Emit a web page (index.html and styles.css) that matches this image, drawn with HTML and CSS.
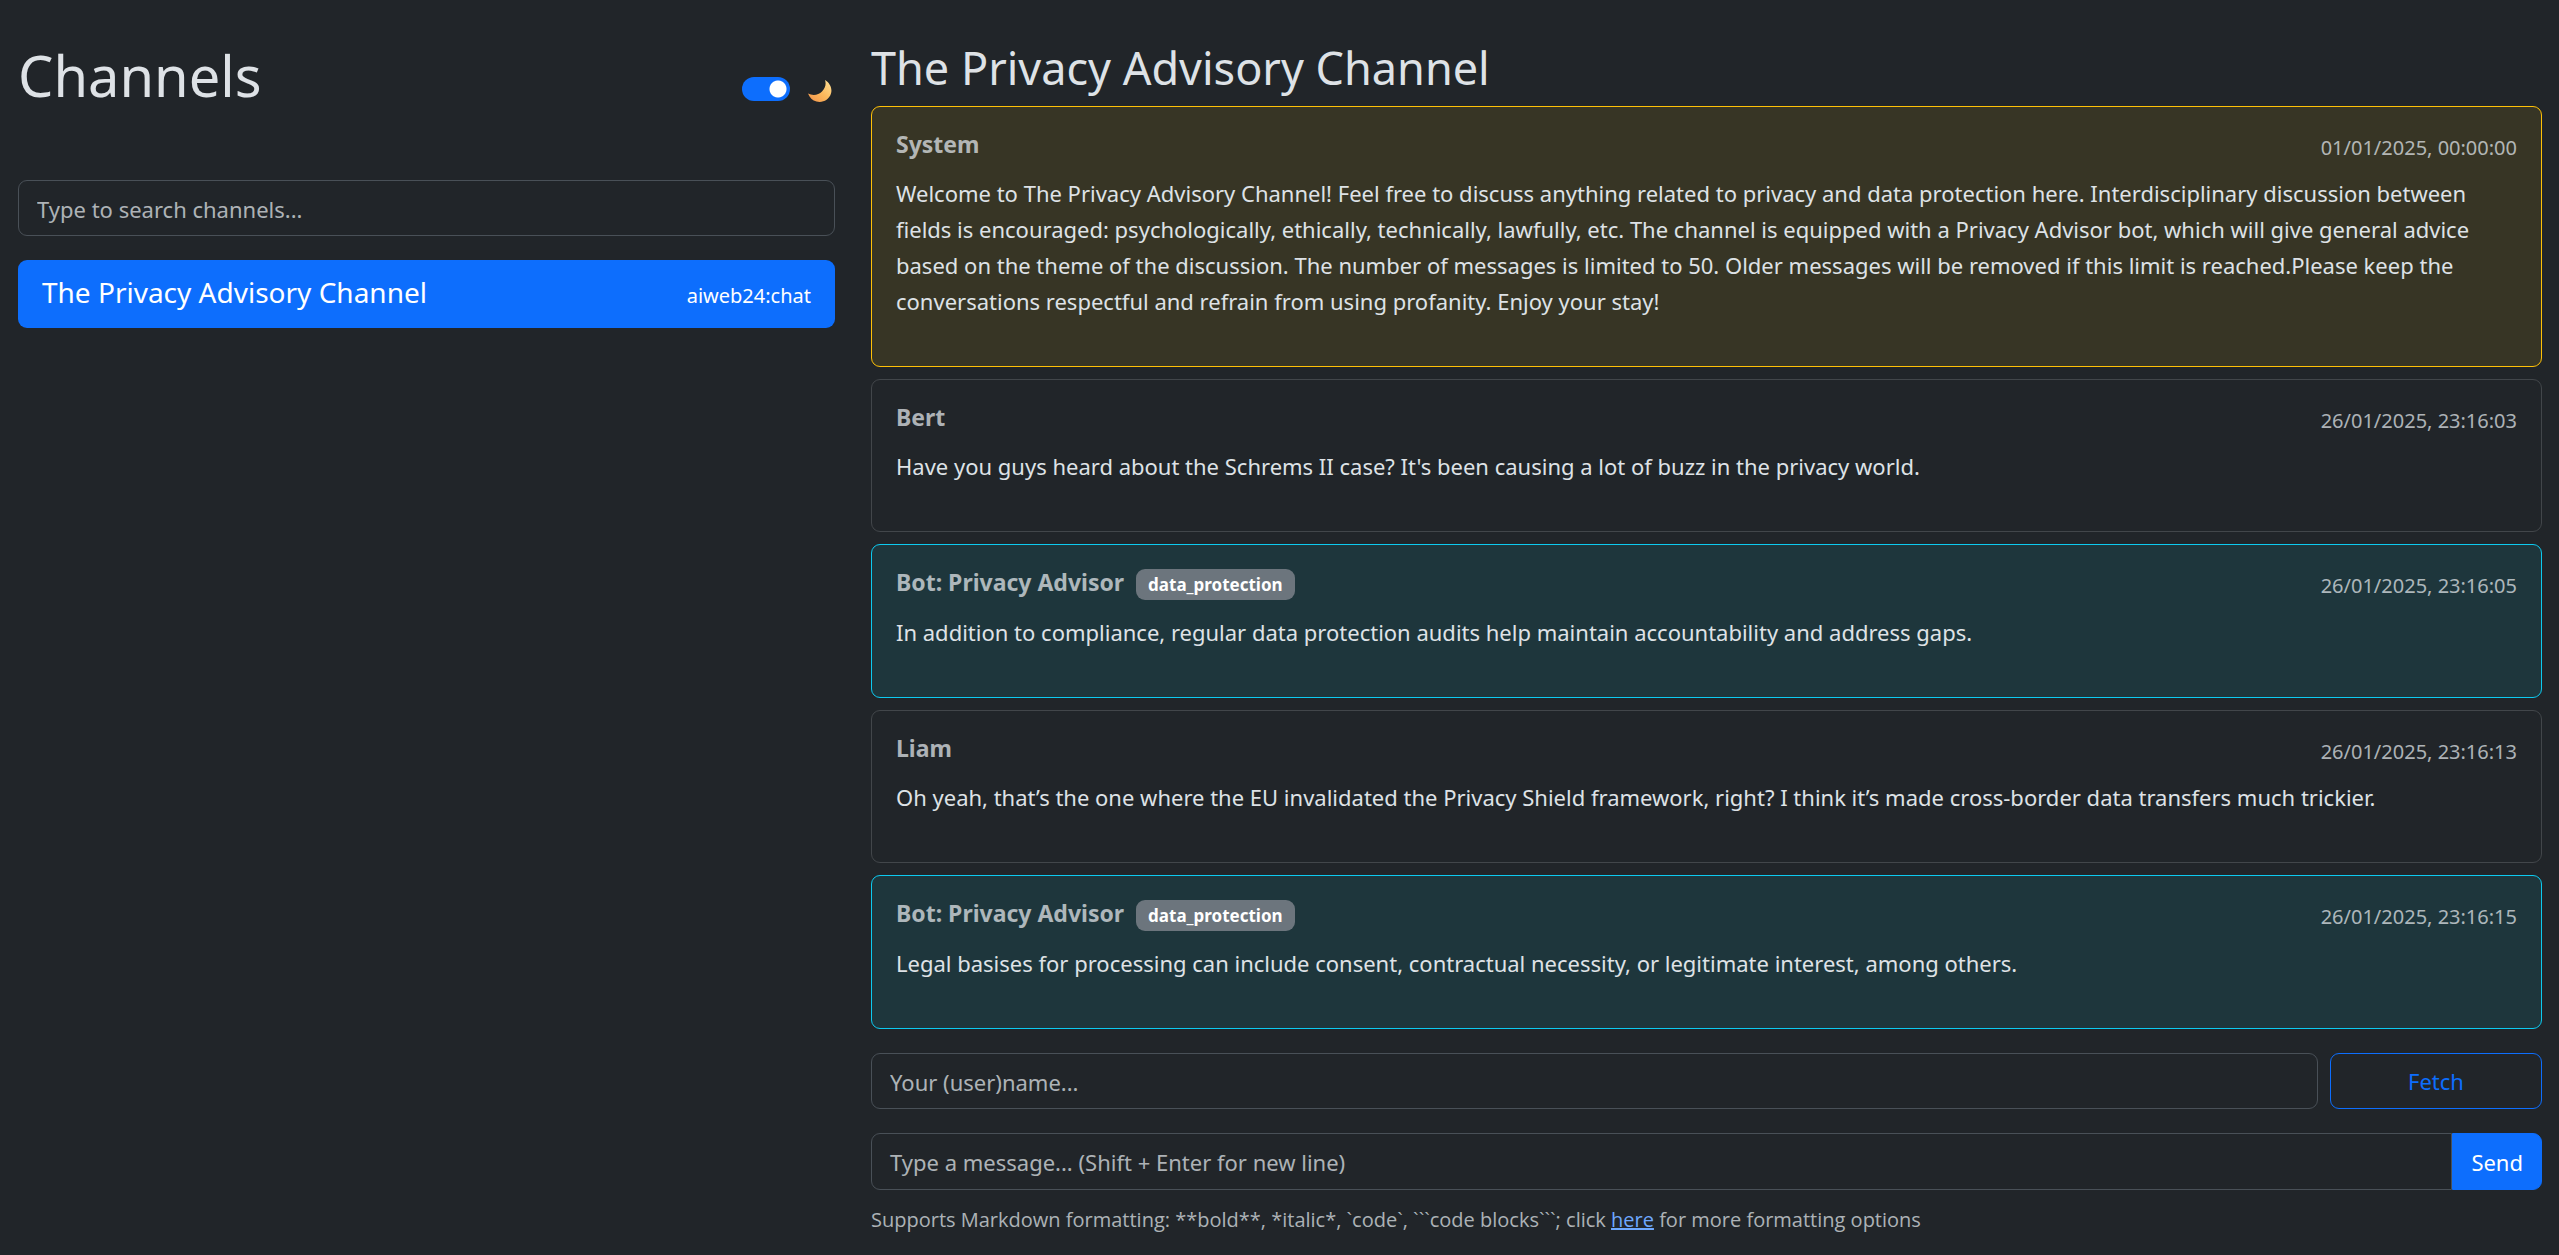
FILE: index.html
```html
<!DOCTYPE html>
<html lang="en">
<head>
<meta charset="utf-8">
<meta name="viewport" content="width=device-width, initial-scale=1">
<title>The Privacy Advisory Channel</title>
<link rel="stylesheet" href="styles.css">
</head>
<body>
<div class="layout">
  <aside class="sidebar">
    <header class="sidebar-header">
      <h1>Channels</h1>
      <label class="theme-switch">
        <input type="checkbox" role="switch" aria-label="Dark mode" checked>
        <svg class="moon" viewBox="0 0 24 24" aria-hidden="true">
          <defs>
            <linearGradient id="moon-fill" x1="0" y1="1" x2="1" y2="0">
              <stop offset="0" stop-color="#f0914a"/>
              <stop offset="0.5" stop-color="#fdb95c"/>
              <stop offset="1" stop-color="#ffe39a"/>
            </linearGradient>
          </defs>
          <path fill="url(#moon-fill)" d="M17 1C22 4 24.500 9.500 23 14.500C21 21 14.500 24 8.500 22.500C4.500 21.500 1.500 18.500 0 14.500C5 17 10.500 16 14 12.500C17.500 9 18.300 5 17 1Z"/>
        </svg>
      </label>
    </header>
    <input class="field" type="search" placeholder="Type to search channels..." aria-label="Search channels">
    <nav aria-label="Channels">
      <a class="channel" href="#"><span class="channel-name">The Privacy Advisory Channel</span><small>aiweb24:chat</small></a>
    </nav>
  </aside>
  <main class="chat">
    <h2>The Privacy Advisory Channel</h2>
    <div class="messages">
      <article class="message message-system">
        <header><strong>System</strong><time>01/01/2025, 00:00:00</time></header>
        <p>Welcome to The Privacy Advisory Channel! Feel free to discuss anything related to privacy and data protection here. Interdisciplinary discussion between fields is encouraged: psychologically, ethically, technically, lawfully, etc. The channel is equipped with a Privacy Advisor bot, which will give general advice based on the theme of the discussion. The number of messages is limited to 50. Older messages will be removed if this limit is reached.Please keep the conversations respectful and refrain from using profanity. Enjoy your stay!</p>
      </article>
      <article class="message">
        <header><strong>Bert</strong><time>26/01/2025, 23:16:03</time></header>
        <p>Have you guys heard about the Schrems II case? It's been causing a lot of buzz in the privacy world.</p>
      </article>
      <article class="message message-bot">
        <header><strong>Bot: Privacy Advisor</strong><span class="badge">data_protection</span><time>26/01/2025, 23:16:05</time></header>
        <p>In addition to compliance, regular data protection audits help maintain accountability and address gaps.</p>
      </article>
      <article class="message">
        <header><strong>Liam</strong><time>26/01/2025, 23:16:13</time></header>
        <p>Oh yeah, that’s the one where the EU invalidated the Privacy Shield framework, right? I think it’s made cross-border data transfers much trickier.</p>
      </article>
      <article class="message message-bot">
        <header><strong>Bot: Privacy Advisor</strong><span class="badge">data_protection</span><time>26/01/2025, 23:16:15</time></header>
        <p>Legal basises for processing can include consent, contractual necessity, or legitimate interest, among others.</p>
      </article>
    </div>
    <form class="composer">
      <div class="name-row">
        <input class="field" type="text" placeholder="Your (user)name..." aria-label="Your (user)name">
        <button class="button button-outline" type="button">Fetch</button>
      </div>
      <div class="message-row">
        <textarea class="field" rows="1" placeholder="Type a message... (Shift + Enter for new line)" aria-label="Message"></textarea>
        <button class="button button-send" type="submit">Send</button>
      </div>
      <p class="hint">Supports Markdown formatting: **bold**, *italic*, `code`, ```code blocks```; click <a href="#">here</a> for more formatting options</p>
    </form>
  </main>
</div>
</body>
</html>
```
FILE: styles.css
```css
:root {
  --bg: #212529;
  --text: #dee2e6;
  --muted: rgba(222, 226, 230, 0.75);
  --border: #495057;
  --primary: #0d6efd;
  --radius: 9px;
}

* {
  box-sizing: border-box;
}

body {
  margin: 0;
  background: var(--bg);
  color: var(--text);
  font: 22px/36px "Noto Sans", "Open Sans", sans-serif;
}

h1, h2, p {
  margin: 0;
}

h1, h2 {
  font-weight: 400;
}

.layout {
  display: grid;
  grid-template-columns: 1fr 2fr;
  padding-top: 36px;
}

.sidebar, .chat {
  min-width: 0;
  padding: 0 18px;
}

.chat {
  padding-right: 17px;
}

.sidebar-header {
  display: flex;
  justify-content: space-between;
  align-items: flex-start;
  height: 144px;
}

h1 {
  font-size: 56px;
  line-height: 78px;
}

.theme-switch {
  display: flex;
  align-items: center;
  gap: 18px;
  padding: 39px 3px 0 0;
}

.theme-switch input {
  appearance: none;
  width: 48px;
  height: 24px;
  margin: 0;
  border-radius: 12px;
  background: radial-gradient(circle at 36px 12px, #fff 8px, transparent 9px) var(--primary);
}

.moon {
  width: 24px;
  height: 24px;
  margin-top: 4px;
}

.field {
  display: block;
  width: 100%;
  height: 56px;
  margin: 0;
  padding: 10px 18px 8px;
  border: 1px solid var(--border);
  border-radius: var(--radius);
  background: var(--bg);
  color: var(--text);
  font: inherit;
  resize: none;
  outline: none;
}

.field::placeholder {
  color: var(--muted);
  opacity: 1;
}

.channel {
  display: flex;
  justify-content: space-between;
  align-items: baseline;
  margin-top: 24px;
  padding: 14px 24px 18px;
  border-radius: var(--radius);
  background: var(--primary);
  color: #fff;
  text-decoration: none;
}

.channel-name {
  font-size: 28px;
}

.channel small {
  font-size: 20px;
  line-height: 24px;
}

h2 {
  font-size: 45px;
  line-height: 64px;
  margin-bottom: 6px;
}

.messages {
  display: grid;
  gap: 12px;
}

.message {
  padding: 24px;
  border: 1px solid #42464a;
  border-radius: var(--radius);
}

.message-system {
  border-color: #ffc107;
  background: rgba(255, 193, 7, 0.1);
}

.message-bot {
  border-color: #0dcaf0;
  background: rgba(13, 202, 240, 0.1);
}

.message header {
  display: flex;
  align-items: flex-start;
  height: 32px;
  line-height: 26px;
  margin-bottom: 12px;
  color: var(--muted);
}

.message-bot header {
  height: 33px;
}

.message strong {
  font-size: 23px;
}

.message time {
  margin-left: auto;
  font-size: 20px;
  line-height: 34px;
}

.message p {
  margin-bottom: 23px;
}

.badge {
  margin-left: 12px;
  padding: 0 12px;
  border-radius: var(--radius);
  background: #6c757d;
  color: #fff;
  font-size: 17px;
  font-weight: 700;
  line-height: 31px;
}

.composer {
  margin-top: 24px;
}

.name-row {
  display: grid;
  grid-template-columns: 1fr 212px;
  gap: 12px;
  margin-bottom: 24px;
}

.message-row {
  display: flex;
}

.message-row .field {
  flex: 1;
  height: 57px;
  border-radius: var(--radius) 0 0 var(--radius);
}

.button {
  padding: 0 18px;
  border: 1px solid var(--primary);
  border-radius: var(--radius);
  font: inherit;
}

.button-outline {
  background: transparent;
  color: var(--primary);
}

.button-send {
  border-radius: 0 var(--radius) var(--radius) 0;
  background: var(--primary);
  color: #fff;
}

.hint {
  margin-top: 12px;
  color: var(--muted);
  font-family: "Open Sans", "Noto Sans", sans-serif;
  font-size: 20px;
}

.hint a {
  color: #6ea8fe;
}
```
